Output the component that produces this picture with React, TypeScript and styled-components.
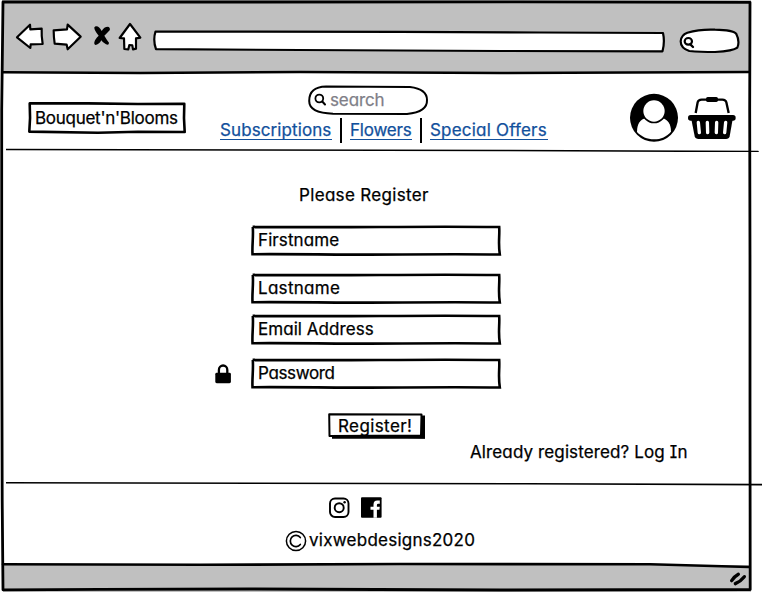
import React from 'react';
import styled, { createGlobalStyle } from 'styled-components';

const GlobalStyle = createGlobalStyle`
  *, *::before, *::after { box-sizing: border-box; }
  html, body { margin: 0; padding: 0; background: #fff; }
  body {
    font-family: Inter, 'Noto Sans', sans-serif;
    font-size: 17px;
    line-height: 20px;
    font-feature-settings: 'cv11' 1, 'cv08' 1, 'calt' 0;
    -webkit-text-stroke: 0.25px currentColor;
    color: #000;
  }
  svg { display: block; }
`;

const Page = styled.div`
  position: relative;
  display: flex;
  flex-direction: column;
  width: 762px;
  height: 592px;
  overflow: hidden;
  background: #fff;
`;

const Overlay = styled.svg`
  position: absolute;
  inset: 0;
  width: 100%;
  height: 100%;
  overflow: visible;
  pointer-events: none;
`;

const Toolbar = styled.div`
  display: flex;
  gap: 5px;
  width: 749px;
  height: 73px;
  margin-left: 2px;
  padding: 20px 0 0 12px;
  background: #c0c0c0;
`;

const Header = styled.header`
  display: flex;
  align-items: flex-start;
  height: 75px;
  padding-left: 28px;
`;

const Text = styled.span<{ $track?: number }>`
  white-space: nowrap;
  letter-spacing: ${(p) => p.$track ?? 0}px;
`;

const Brand = styled.div`
  position: relative;
  width: 158px;
  height: 32px;
  margin-top: 29px;
  padding: 6px 0 0 7px;
`;

const Nav = styled.nav`
  display: flex;
  flex-direction: column;
  align-items: flex-start;
  width: 328px;
  margin: 12px 0 0 34px;
`;

const Search = styled.div`
  position: relative;
  display: flex;
  align-items: center;
  gap: 3px;
  width: 120px;
  height: 30px;
  margin-left: 88px;
  padding: 0 0 1px 6px;
  color: #7f7f88;
`;

const Links = styled.div`
  display: flex;
  align-items: flex-start;
  margin-top: 3px;
`;

const Link = styled.a<{ $w: number }>`
  width: ${(p) => p.$w}px;
  height: 22px;
  padding-top: 2px;
  border-bottom: 1px solid #11509c;
  color: #11509c;
  white-space: nowrap;
`;

const Separator = styled.i`
  width: 2px;
  height: 25px;
  margin: 0 8px;
  background: #000;
`;

const Account = styled.div`
  display: flex;
  gap: 8px;
  margin: 20px 0 0 81px;
`;

const Divider = styled.svg`
  width: 756px;
  height: 4px;
  margin-left: 6px;
  flex-shrink: 0;
`;

const Main = styled.main`
  display: flex;
  flex-direction: column;
  height: 330px;
  padding: 33px 0 0 215px;
`;

const Title = styled.h1`
  margin: 0 0 20px 84px;
  font: inherit;
  line-height: 20px;
`;

const Row = styled.div<{ $gap: number }>`
  display: flex;
  align-items: center;
  height: 31px;
  margin-bottom: ${(p) => p.$gap}px;
`;

const Marker = styled.div`
  width: 36px;
  flex-shrink: 0;
`;

const Field = styled.div`
  position: relative;
  width: 250px;
  height: 31px;
  padding: 5px 0 0 7px;
`;

const Button = styled.div`
  position: relative;
  width: 98px;
  height: 26px;
  margin-left: 113px;
  padding: 3px 0 0 10px;
`;

const Login = styled.div`
  margin: 3px 0 0 255px;
`;

const Footer = styled.footer`
  display: flex;
  flex-direction: column;
  height: 79px;
  padding: 11px 0 0 285px;
`;

const Social = styled.div`
  display: flex;
  gap: 10px;
  margin: 0 0 11px 43px;
`;

const Copyright = styled.div`
  display: flex;
  align-items: flex-start;
  gap: 2px;
`;

const StatusBar = styled.div`
  display: flex;
  justify-content: flex-end;
  width: 748px;
  height: 27px;
  margin-left: 3px;
  padding: 7px 4px 0 0;
  background: #c0c0c0;
`;

const Front = styled(Text)`
  position: relative;
`;

const ink = {
  fill: 'none',
  stroke: '#000',
  strokeLinejoin: 'round' as const,
  strokeLinecap: 'round' as const,
};

function FieldOutline() {
  return (
    <Overlay viewBox="0 0 250 31">
      <path d="M1.6 1.9C60 1.7 90 2.3 130 2S210 1.600 248.200 2C248.800 12 247 17 248.800 29.500C190 28.800 140 29.800 100 29.600S40 29 1.500 29.200C1 20 2.500 12 1.800 1.900Z" {...ink} strokeLinejoin="miter" strokeWidth="2.600" />
    </Overlay>
  );
}

const fields: { label: string; gap: number; track: number; locked?: boolean }[] = [
  { label: 'Firstname', gap: 17, track: 0.1 },
  { label: 'Lastname', gap: 10, track: 0.3 },
  { label: 'Email Address', gap: 13, track: 0.05 },
  { label: 'Password', gap: 24, track: -0.35, locked: true },
];

function Lock() {
  return (
    <svg width="17" height="20" viewBox="0 0 17 20">
      <path d="M3.900 10V5.900a4.200 4.400 0 0 1 8.400 0v4" {...ink} strokeWidth="2.300" />
      <rect x="0.300" y="8.800" width="15.600" height="10.400" rx="1.400" />
    </svg>
  );
}

export default function App() {
  return (
    <>
      <GlobalStyle />
      <Page>
        <Toolbar>
          <svg width="32" height="36" viewBox="42 60 96 108">
            <path d="M51 112L90 74L91 88L125 86Q124 110 128 132L92 133L91 144Z" {...ink} fill="#fff" strokeWidth="6.500" />
          </svg>
          <svg width="36" height="36" viewBox="153 60 108 108">
            <path d="M161 91L201 88L203 74L242 110L203 148L200 134L164 131Q161 110 161 91Z" {...ink} fill="#fff" strokeWidth="6.500" />
          </svg>
          <svg width="20" height="36" viewBox="276 60 60 108">
            <path d="M287 79Q297 77 305 93Q312 80 324 80Q332 83 329 91Q320 101 313 107Q320 119 327 128Q327 137 318 133Q307 127 304 121Q297 134 286 135Q280 132 285 121Q291 111 296 107Q282 91 283 82Z" />
          </svg>
          <svg width="30" height="36" viewBox="351 60 90 108">
            <path d="M359 114L390 72L421 113L408 115L408 146L399 148L397 136L388 135L385 148L373 147L372 115Z" {...ink} fill="#fff" strokeWidth="6.500" />
          </svg>
          <svg width="520" height="36" viewBox="152 20 520 36">
            <path d="M155.500 31.500L400 31.800L540 32.500L663 33Q665 42 662.500 51.300L500 51L300 50L156 49.200Q152.800 40 155.500 31.500Z" {...ink} fill="#fff" strokeWidth="2.200" />
          </svg>
          <svg width="64" height="36" viewBox="231 60 192 108">
            <path d="M262 98Q300 87 345 89Q400 90 409 102Q420 124 412 143Q400 153 345 156Q300 156 268 153Q242 145 242 124Q243 105 262 98Z" {...ink} fill="#fff" strokeWidth="6.500" />
            <ellipse cx="265" cy="124" rx="11" ry="10" {...ink} strokeWidth="6.500" />
            <path d="M271 133L279 141" {...ink} strokeWidth="7" />
          </svg>
        </Toolbar>

        <Header>
          <Brand>
            <Overlay viewBox="0 0 158 32">
              <path d="M1.700 1.400L60 1.400L110 2L156.300 1.700Q155.500 16 156.700 30L110 29.700L70 30.700L1.300 29.600Q2.600 16 1.700 1.400Z" {...ink} strokeWidth="2.600" />
            </Overlay>
            <Front $track={-0.27}>Bouquet'n'Blooms</Front>
          </Brand>
          <Nav>
            <Search>
              <Overlay viewBox="0 0 120 30">
                <path d="M18 1.500L102 2Q119 4 119 15Q119.500 27 99 29L25 28.700Q1.200 28 1.200 16Q1 2 18 1.500Z" {...ink} strokeWidth="2" />
              </Overlay>
              <svg width="13" height="13" viewBox="0 0 13 13">
                <circle cx="5.300" cy="5.500" r="3.900" {...ink} strokeWidth="1.800" />
                <path d="M8.300 8.500L11 11.500" {...ink} strokeWidth="2" />
              </svg>
              <Text $track={-0.1}>search</Text>
            </Search>
            <Links>
              <Link $w={112}><Text $track={0.1}>Subscriptions</Text></Link>
              <Separator />
              <Link $w={62}><Text $track={-0.2}>Flowers</Text></Link>
              <Separator />
              <Link $w={118}><Text $track={0.2}>Special Offers</Text></Link>
            </Links>
          </Nav>
          <Account>
            <svg width="50" height="50" viewBox="87 279 150 150">
              <circle cx="162" cy="353.500" r="72" />
              <path d="M111 396C111 371 122 357 137 355L187 355C203 358 213 372 213 395C200 410 183 418 162 418S124 410 111 396Z" fill="#fff" />
              <circle cx="162" cy="333" r="37" />
              <circle cx="162" cy="333" r="32" fill="#fff" />
            </svg>
            <svg width="50" height="50" viewBox="261 279 150 150">
              <path d="M287 339L293 307Q295 299 305 299L367 299Q377 299 379 307L386 339" {...ink} strokeLinecap="butt" strokeWidth="7" />
              <rect x="318" y="291" width="36" height="15" rx="5" />
              <rect x="264" y="345" width="143" height="17" rx="8" />
              <path d="M274 358L284 409Q286 417 296 417H378Q387 417 389 409L398 358Z" />
              <path d="M295 367L298 398M322 367L323 398M350 367L349 398M377 367L374 398" {...ink} stroke="#fff" strokeWidth="10" />
            </svg>
          </Account>
        </Header>

        <Divider viewBox="0 0 756 4">
          <path d="M0 1.500L250 2L500 2.500L752 3.500" {...ink} strokeWidth="1.600" />
        </Divider>

        <Main>
          <Title><Text $track={0.33}>Please Register</Text></Title>
          {fields.map((f) => (
            <Row key={f.label} $gap={f.gap}>
              <Marker>{f.locked && <Lock />}</Marker>
              <Field>
                <FieldOutline />
                <Front $track={f.track}>{f.label}</Front>
              </Field>
            </Row>
          ))}
          <Button>
            <Overlay viewBox="0 0 98 26">
              <path d="M5 23L97 25.500V2.500H93V22Z" />
              <path d="M4 22.500H97V25.800H4Z" />
              <path d="M1.200 1.200L93.500 1.500L93 22.500L1.500 23Z" {...ink} fill="#fff" strokeWidth="2" />
            </Overlay>
            <Front $track={0.4}>Register!</Front>
          </Button>
          <Login><Text $track={0.12}>Already registered? Log In</Text></Login>
        </Main>

        <Divider viewBox="0 0 756 4">
          <path d="M0 0.800L250 1.200L520 1.800L756 2.600" {...ink} strokeWidth="1.600" />
        </Divider>

        <Footer>
          <Social>
            <svg width="22" height="22" viewBox="0 0 22 22">
              <rect x="2" y="1.500" width="18.500" height="18.500" rx="5" {...ink} strokeWidth="1.900" />
              <circle cx="11.200" cy="10.700" r="4.500" {...ink} strokeWidth="1.900" />
              <circle cx="16.600" cy="5.300" r="1.200" />
            </svg>
            <svg width="22" height="22" viewBox="0 0 22 22">
              <rect x="1" y="0.300" width="20.600" height="20.500" rx="1" />
              <path d="M13.500 20.800V12.800H10.500V9.700H13.500V7.700Q13.500 3.600 17.300 3.600H19.800V6.800H18.200Q16.900 6.800 16.900 8.200V9.700H19.800L19.400 12.800H16.900V20.800Z" fill="#fff" />
            </svg>
          </Social>
          <Copyright>
            <svg width="22" height="22" viewBox="0 0 22 22">
              <circle cx="11" cy="11" r="9.600" {...ink} strokeWidth="1.500" />
              <path d="M15.300 7.500A5.600 5.600 0 1 0 15.300 14.500" {...ink} strokeWidth="1.700" />
            </svg>
            <Text $track={0.25}>vixwebdesigns2020</Text>
          </Copyright>
        </Footer>

        <StatusBar>
          <svg width="18" height="16" viewBox="387 307 54 48">
            <path d="M395 333Q404 320 415 314M406 342Q421 336 433 321" {...ink} strokeWidth="10" />
          </svg>
        </StatusBar>

        <Overlay viewBox="0 0 762 592">
          <path d="M3 2L260 2L520 1.800L750 2.300L749.700 110L750 260L750 400L750.200 589.500L500 590L250 589L100 589.400L3 589.800L2.200 500L1.700 300L1.700 110L3 2" {...ink} strokeWidth="2.800" />
          <path d="M3 72.300L140 73L300 72L500 73L749 72" {...ink} strokeWidth="2.500" />
          <path d="M3 564.300L200 564.800L400 564L650 564.200L749 567" {...ink} strokeWidth="2.600" />
        </Overlay>
      </Page>
    </>
  );
}
